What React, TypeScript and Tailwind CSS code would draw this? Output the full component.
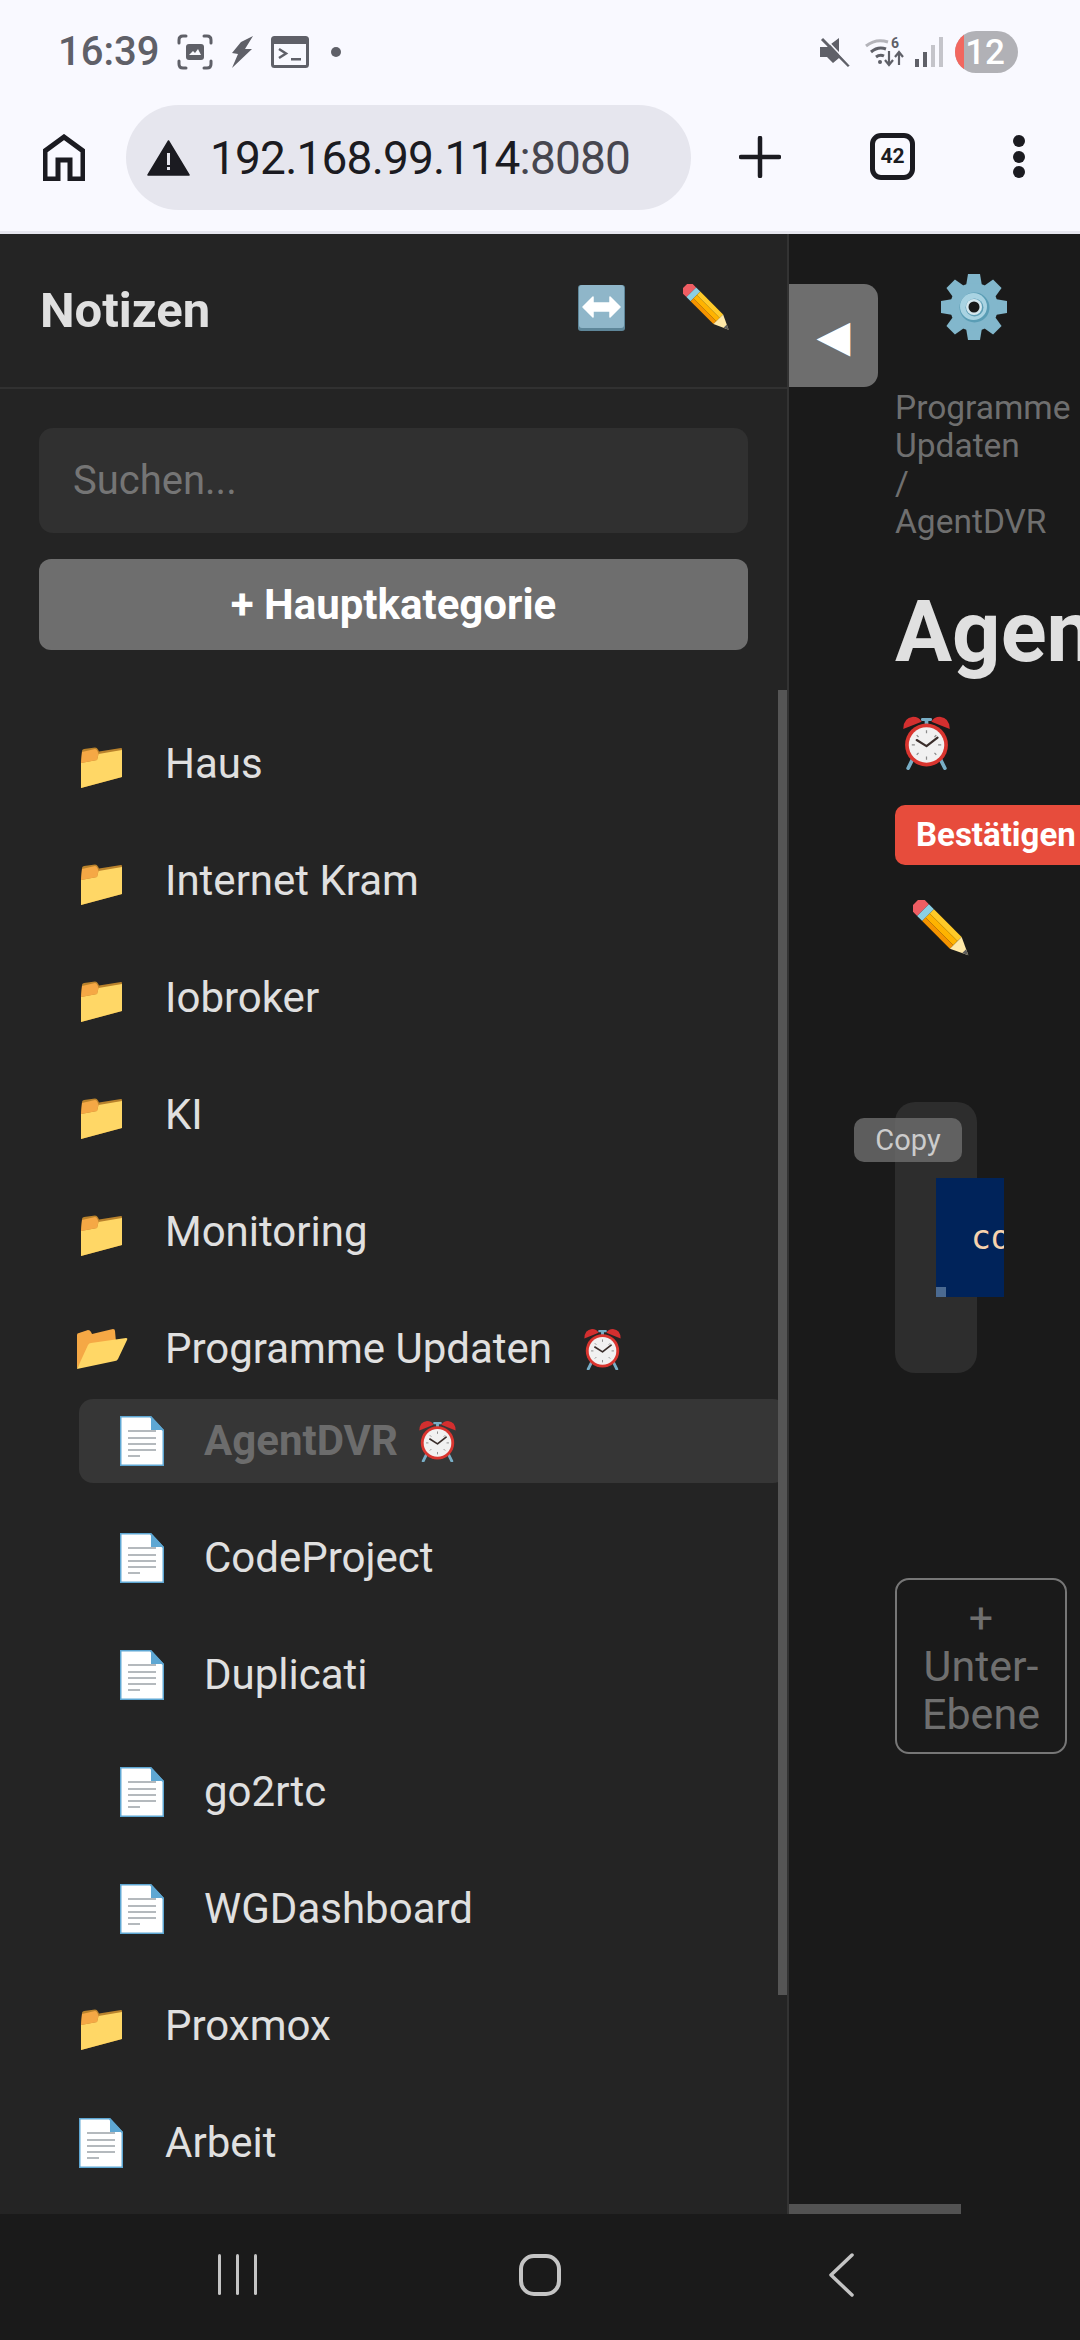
import React from 'react';

const font = "font-['Roboto','Noto_Sans',sans-serif]";

function Folder() {
  return (
    <svg width="50" height="50" viewBox="0 0 50 50" className="flex-none">
      <path d="M5 23 L6 12 Q6 10.500 8 10 L19 8.500 Q21 8.500 22 10.500 L23 12.500 L45 9 Q46 9 46 10 L46 38 L5 49Z" fill="#b9822c" />
      <path d="M5 24 L21 21 L22.500 15 L46 11 L46 38 L5 49Z" fill="#ffd766" />
      <path d="M5 24 L6 13 L19 10 Q20.500 10 21.500 12 L22.500 15 L21 21Z" fill="#f5a845" />
    </svg>
  );
}

function OpenFolder() {
  return (
    <svg width="52" height="42" viewBox="0 0 52 42" className="flex-none">
      <path d="M1 41 L1 7 Q1 5 3 5 L12 2 Q14 2 15 4 L16 6 L37 1 Q39 1 39 3 L40 14 L14 18Z" fill="#f5a845" />
      <path d="M1 41 L12 17 Q13 15 15 15 L50 10 Q52 10 51 12 L42 31 Q41 33 39 33Z" fill="#ffd766" />
    </svg>
  );
}

function Doc() {
  return (
    <svg width="46" height="50" viewBox="0 0 46 50" className="flex-none">
      <path d="M1 0 L32 0 L45 14 L45 50 L1 50Z" fill="#5ea7d3" />
      <path d="M2.500 1.500 L31 1.500 L43.500 15 L43.500 48.500 L2.500 48.500Z" fill="#ffffff" />
      <path d="M32 0 L45 14 L32 14Z" fill="#5ea7d3" />
      <rect x="9" y="14" width="28" height="2" fill="#b4b9bd" />
      <rect x="9" y="21" width="28" height="2" fill="#b4b9bd" />
      <rect x="9" y="27" width="28" height="2" fill="#b4b9bd" />
      <rect x="9" y="33" width="28" height="2" fill="#b4b9bd" />
      <rect x="9" y="39" width="12" height="2" fill="#b4b9bd" />
    </svg>
  );
}

function Alarm({ w = 39, h = 42 }: { w?: number; h?: number }) {
  return (
    <svg width={w} height={h} viewBox="0 0 40 44" className="flex-none">
      <path d="M9 35 L5 43 M31 35 L35 43" stroke="#78aec6" strokeWidth="3" strokeLinecap="round" />
      <rect x="18.500" y="3" width="3" height="6" fill="#78aec6" />
      <rect x="15.500" y="2" width="9" height="2.500" rx="1" fill="#78aec6" />
      <path d="M1 11 Q1 2 9 1 Q14 1 16 5 Z" fill="#d32f2f" />
      <path d="M39 11 Q39 2 31 1 Q26 1 24 5 Z" fill="#d32f2f" />
      <circle cx="20" cy="24" r="17.500" fill="#d9352f" />
      <circle cx="20" cy="24" r="14.500" fill="#f1f1f1" />
      <path d="M20 12 V14.500 M20 33.500 V36 M8 24 H10.500 M29.500 24 H32 M12 16 L13.500 17.500 M28 16 L26.500 17.500 M12 32 L13.500 30.500 M28 32 L26.500 30.500" stroke="#8a8a8a" strokeWidth="1" />
      <path d="M12 20 L20 25 L29 18" stroke="#3a2e2b" strokeWidth="1.800" fill="none" strokeLinecap="round" strokeLinejoin="round" />
    </svg>
  );
}

function Pencil({ size }: { size: number }) {
  return (
    <svg width={size} height={size} viewBox="0 0 48 48" className="flex-none">
      <g transform="translate(24 24) rotate(45)">
        <path d="M-22 -7 H-27 Q-31 -7 -31 -3 V3 Q-31 7 -27 7 H-22Z" fill="#ee5d63" />
        <rect x="-22" y="-7" width="6" height="14" fill="#8ccfe3" />
        <rect x="-16" y="-7" width="33" height="5" fill="#ffca28" />
        <rect x="-16" y="-2" width="33" height="5" fill="#ffb300" />
        <rect x="-16" y="3" width="33" height="4" fill="#f59400" />
        <path d="M17 -7 L32 0 L17 7Z" fill="#ffe9a8" />
        <path d="M27 -2.300 L32 0 L27 2.300Z" fill="#5c5c5c" />
      </g>
    </svg>
  );
}

function Gear() {
  const angles = [0, 45, 90, 135, 180, 225, 270, 315];
  return (
    <svg width="66" height="66" viewBox="0 0 66 66" className="flex-none">
      {angles.map((a) => (
        <path key={a} d="M27 0 H39 L41 12 H25Z" fill="#82b7cc" transform={`rotate(${a} 33 33)`} />
      ))}
      <circle cx="33" cy="33" r="24" fill="#82b7cc" />
      <circle cx="33.500" cy="33.500" r="15" fill="#5a9db5" />
      <circle cx="32.500" cy="32.500" r="13.500" fill="#a9d3e2" />
      <circle cx="33.500" cy="33.500" r="9" fill="#5f9fb6" />
      <circle cx="33" cy="33" r="8" fill="#d5e8ef" />
      <circle cx="33" cy="33" r="5.500" fill="#1a1a1a" />
    </svg>
  );
}

function ArrowBox() {
  return (
    <svg width="47" height="46" viewBox="0 0 47 46" className="flex-none">
      <rect width="47" height="46" rx="3" fill="#5e8699" />
      <rect width="45" height="43" x="1" rx="3" fill="#8fb6c9" />
      <path d="M5 22 L15 12 V18 H32 V12 L42 22 L32 32 V26 H15 V32Z" fill="#ffffff" stroke="#ffffff" strokeWidth="1.500" strokeLinejoin="round" />
    </svg>
  );
}

function StatusLeft() {
  return (
    <div className="flex items-center">
      <span className="text-[40px] leading-none font-medium text-[#5f6068] w-[119px]">16:39</span>
      <svg width="36" height="36" viewBox="0 0 36 36" className="flex-none">
        <path d="M9 2 H6 Q2 2 2 6 V9 M27 2 H30 Q34 2 34 6 V9 M9 34 H6 Q2 34 2 30 V27 M27 34 H30 Q34 34 34 30 V27" stroke="#5f6068" strokeWidth="3" fill="none" strokeLinecap="round" />
        <rect x="9" y="10" width="18" height="16" rx="3" fill="#5f6068" />
        <path d="M12 21 L16 17 L18 19 L21 15 L24 21Z" fill="#f9f9ff" />
      </svg>
      <svg width="24" height="32" viewBox="0 0 24 32" className="flex-none ml-[18px]">
        <path d="M22 0 L14 13 L21 13 L1 32 L7 18 L1 17 L10 6Z" fill="#5f6068" />
      </svg>
      <svg width="38" height="32" viewBox="0 0 38 32" className="flex-none ml-[16px]">
        <rect x="1.500" y="1.500" width="35" height="29" rx="2" fill="none" stroke="#5f6068" strokeWidth="3" />
        <rect x="1" y="1" width="36" height="7" fill="#5f6068" />
        <path d="M8 13 L15 17.500 L8 22" stroke="#5f6068" strokeWidth="2.500" fill="none" />
        <rect x="20" y="22" width="10" height="2.500" fill="#5f6068" />
      </svg>
      <span className="w-[10px] h-[10px] rounded-full bg-[#5f6068] ml-[22px]" />
    </div>
  );
}

function StatusRight() {
  return (
    <div className="flex items-center">
      <svg width="32" height="30" viewBox="0 0 32 30" className="flex-none">
        <path d="M1 10 H8 L20 1 V21 L14 26 L8 20 H1Z" fill="#5f6068" />
        <path d="M3 2 L30 29" stroke="#5f6068" strokeWidth="3" />
        <path d="M1 1 L28 30" stroke="#f9f9ff" strokeWidth="1.500" transform="translate(3 -2)" />
      </svg>
      <svg width="41" height="31" viewBox="0 0 41 31" className="flex-none ml-[14px]">
        <path d="M1 9 Q11 1 23 5" stroke="#b4b4ba" strokeWidth="3" fill="none" />
        <path d="M6 15 Q13 9 21 12" stroke="#5f6068" strokeWidth="3" fill="none" />
        <path d="M11 20 Q15 17 19 19" stroke="#5f6068" strokeWidth="3" fill="none" />
        <circle cx="15" cy="25" r="2" fill="#5f6068" />
        <path d="M24 14 V27 M20 23 L24 28 L28 23 M34 28 V16 M30 20 L34 15 L38 20" stroke="#5f6068" strokeWidth="2.200" fill="none" />
        <text x="26" y="11" fontSize="14" fontWeight="700" fill="#5f6068" fontFamily="Roboto">6</text>
      </svg>
      <svg width="28" height="30" viewBox="0 0 28 30" className="flex-none ml-[9px]">
        <rect x="0" y="22" width="4" height="8" fill="#5f6068" />
        <rect x="8" y="15" width="4" height="15" fill="#5f6068" />
        <rect x="16" y="8" width="4" height="22" fill="#c4c4ca" />
        <rect x="24" y="0" width="4" height="30" fill="#c4c4ca" />
      </svg>
      <div className="relative ml-[12px] w-[63px] h-[42px] rounded-full bg-[#b1b1b6] overflow-hidden flex items-center justify-end pr-[13px]">
        <span className="absolute left-0 top-0 h-full w-[9px] bg-[#f2675f]" />
        <span className="text-[35px] font-medium leading-none text-white">12</span>
      </div>
    </div>
  );
}

function Toolbar() {
  return (
    <div className="h-[129px] flex items-start pl-[43px]">
      <svg width="42" height="47" viewBox="0 0 42 47" className="flex-none mt-[32px]">
        <path d="M2 45 V17 L21 3 L40 17 V45 H27 V26 H15 V45Z" fill="none" stroke="#1b1b21" strokeWidth="5" />
      </svg>
      <div className="ml-[41px] mt-[3px] w-[565px] h-[105px] rounded-full bg-[#e6e6ee] flex items-center pl-[21px]">
        <svg width="43" height="36" viewBox="0 0 43 36" className="flex-none">
          <path d="M21.500 1 L42 35 H1Z" fill="#1b1b21" stroke="#1b1b21" strokeLinejoin="round" strokeWidth="1.500" />
          <rect x="20" y="13" width="3" height="12" fill="#e6e6ee" />
          <rect x="20" y="27" width="3" height="3" fill="#e6e6ee" />
        </svg>
        <span className="ml-[20px] text-[46px] leading-none tracking-[-0.8px] whitespace-nowrap text-[#1b1b21]">
          192.168.99.114<span className="text-[#46464f]">:8080</span>
        </span>
      </div>
      <svg width="42" height="42" viewBox="0 0 42 42" className="flex-none ml-[48px] mt-[34px]">
        <path d="M21 2 V40 M2 21 H40" stroke="#1b1b21" strokeWidth="4.500" strokeLinecap="round" />
      </svg>
      <div className="ml-[89px] mt-[31px] w-[45px] h-[47px] rounded-[11px] border-[5px] border-[#1b1b21] flex items-center justify-center">
        <span className="text-[21px] font-bold leading-none text-[#1b1b21]">42</span>
      </div>
      <div className="ml-[98px] mt-[33px] flex flex-col gap-[3.500px]">
        <span className="w-[12px] h-[12px] rounded-full bg-[#1b1b21]" />
        <span className="w-[12px] h-[12px] rounded-full bg-[#1b1b21]" />
        <span className="w-[12px] h-[12px] rounded-full bg-[#1b1b21]" />
      </div>
    </div>
  );
}

function Row({ icon, label, alarm, sub, active, tight }: {
  icon: 'folder' | 'open' | 'doc';
  label: string;
  alarm?: boolean;
  sub?: boolean;
  active?: boolean;
  tight?: boolean;
}) {
  return (
    <div
      className={`h-[84px] flex items-center rounded-[14px] ${sub ? 'pl-[40px]' : 'pl-[37px]'} ${tight ? 'mb-[8px]' : 'mb-[33px]'} ${active ? 'bg-[#363636]' : ''}`}
    >
      <div className={`flex-none ${sub ? 'w-[46px]' : 'w-[50px]'}`}>
        {icon === 'folder' && <Folder />}
        {icon === 'open' && <OpenFolder />}
        {icon === 'doc' && (
          <div className={sub ? '' : 'ml-[2px]'}>
            <Doc />
          </div>
        )}
      </div>
      <span className={`ml-[39px] text-[42px] leading-none whitespace-nowrap ${active ? 'font-bold text-[#6c6c6c]' : 'text-[#e0e0e0]'}`}>
        {label}
      </span>
      {alarm && (
        <span className={active ? 'ml-[20px]' : 'ml-[31px]'}>
          <Alarm />
        </span>
      )}
    </div>
  );
}

function Sidebar() {
  return (
    <aside className="relative flex-none w-[789px] h-full bg-[#242424] border-r-2 border-[#333333] overflow-hidden">
      <div className="h-[155px] flex items-center px-[40px] border-b-2 border-[#313131]">
        <h2 className="text-[49px] font-bold leading-none text-[#e0e0e0]">Notizen</h2>
        <div className="ml-auto flex items-center gap-[58px] mr-[17px] mb-[6px]">
          <ArrowBox />
          <Pencil size={47} />
        </div>
      </div>
      <div className="px-[39px] pt-[39px]">
        <input
          placeholder="Suchen..."
          className="w-full h-[105px] rounded-[14px] bg-[#303030] pl-[34px] text-[40px] text-[#e0e0e0] placeholder:text-[#757575] outline-none"
        />
        <button className="mt-[26px] w-full h-[91px] rounded-[12px] bg-[#6e6e6e] text-[42px] font-bold text-white">
          + Hauptkategorie
        </button>
      </div>
      <div className="mt-[72px] pl-[39px]">
        <Row icon="folder" label="Haus" />
        <Row icon="folder" label="Internet Kram" />
        <Row icon="folder" label="Iobroker" />
        <Row icon="folder" label="KI" />
        <Row icon="folder" label="Monitoring" />
        <Row icon="open" label="Programme Updaten" alarm tight />
        <div className="ml-[40px]">
          <Row icon="doc" label="AgentDVR" alarm sub active />
          <Row icon="doc" label="CodeProject" sub />
          <Row icon="doc" label="Duplicati" sub />
          <Row icon="doc" label="go2rtc" sub />
          <Row icon="doc" label="WGDashboard" sub />
        </div>
        <Row icon="folder" label="Proxmox" />
        <Row icon="doc" label="Arbeit" />
      </div>
      {/* overlay scrollbar */}
      <div className="absolute right-0 top-[456px] w-[9px] h-[1305px] bg-[#555555]" />
    </aside>
  );
}

function Main() {
  return (
    <main className="relative flex-1 min-w-0 h-full bg-[#1a1a1a] overflow-hidden pl-[106px]">
      <button className="absolute left-0 top-[50px] w-[89px] h-[103px] rounded-r-[14px] bg-[#6e6e6e] text-white text-[44px] leading-none font-['DejaVu_Sans',sans-serif] flex items-center justify-center">
        ◀
      </button>
      <div className="ml-[46px] mt-[40px]">
        <Gear />
      </div>
      <div className="mt-[49px] text-[33.500px] leading-[38px] text-[#6f6f6f]">
        <div>Programme</div>
        <div>Updaten</div>
        <div>/</div>
        <div>AgentDVR</div>
      </div>
      <h1 className="mt-[41px] h-[100px] text-[85px] leading-[100px] font-bold whitespace-nowrap text-[#e0e0e0]">
        AgentDVR
      </h1>
      <div className="mt-[33px] ml-[7px]">
        <Alarm w={49} h={55} />
      </div>
      <button className="mt-[35px] h-[60px] w-[300px] flex-none rounded-[10px] bg-[#e74c3c] text-[33px] font-bold text-white text-left pl-[21px] whitespace-nowrap">
        Bestätigen
      </button>
      <div className="mt-[35px] ml-[18px]">
        <Pencil size={57} />
      </div>
      <div className="relative mt-[145px] w-[82px] h-[271px] rounded-[20px] bg-[#2d2d2d] pt-[76px] pl-[41px]">
        <div className="absolute left-[-41px] top-[16px] w-[108px] h-[44px] rounded-[10px] bg-[#6e6e6e]/80 text-[29px] leading-[44px] text-center text-[#cccccc]">
          Copy
        </div>
        <div className="relative w-[68px] h-[119px] bg-[#00235a] overflow-hidden flex items-center pl-[35px]">
          <span className="font-['DejaVu_Sans_Mono',monospace] text-[33px] text-[#f5d2ae]">code</span>
          <span className="absolute left-0 bottom-0 w-[10px] h-[10px] bg-[#4b6a91]" />
        </div>
      </div>
      <button className="mt-[205px] w-[172px] h-[176px] rounded-[14px] border-2 border-[#777777] text-[43px] leading-[48px] text-[#6f6f6f] text-center">
        <div>+</div>
        <div>Unter-</div>
        <div>Ebene</div>
      </button>
      <div className="absolute left-0 bottom-0 w-[172px] h-[10px] bg-[#525252]" />
    </main>
  );
}

export default function App() {
  return (
    <div className={`w-[1080px] h-[2340px] flex flex-col overflow-hidden bg-[#f9f9ff] ${font}`}>
      <div className="h-[102px] flex items-center justify-between pl-[58px] pr-[62px] pt-[2px]">
        <StatusLeft />
        <StatusRight />
      </div>
      <Toolbar />
      <div className="h-[3px] bg-[#e6e6ee]" />
      <div className="h-[1980px] flex">
        <Sidebar />
        <Main />
      </div>
      <nav className="flex-1 bg-[#1a1a1a] relative">
        <div className="h-full flex items-center pb-[5px]">
          <div className="ml-[218px] flex gap-[15px]">
            <span className="w-[3px] h-[41px] rounded-full bg-[#c4c4c4]" />
            <span className="w-[3px] h-[41px] rounded-full bg-[#c4c4c4]" />
            <span className="w-[3px] h-[41px] rounded-full bg-[#c4c4c4]" />
          </div>
          <span className="ml-[262px] w-[42px] h-[42px] rounded-[15px] border-[4px] border-[#c4c4c4]" />
          <svg width="28" height="44" viewBox="0 0 28 44" className="ml-[266px] flex-none">
            <path d="M25 2 L4 22 L25 42" stroke="#c4c4c4" strokeWidth="3.500" fill="none" strokeLinecap="round" strokeLinejoin="round" />
          </svg>
        </div>
      </nav>
    </div>
  );
}
